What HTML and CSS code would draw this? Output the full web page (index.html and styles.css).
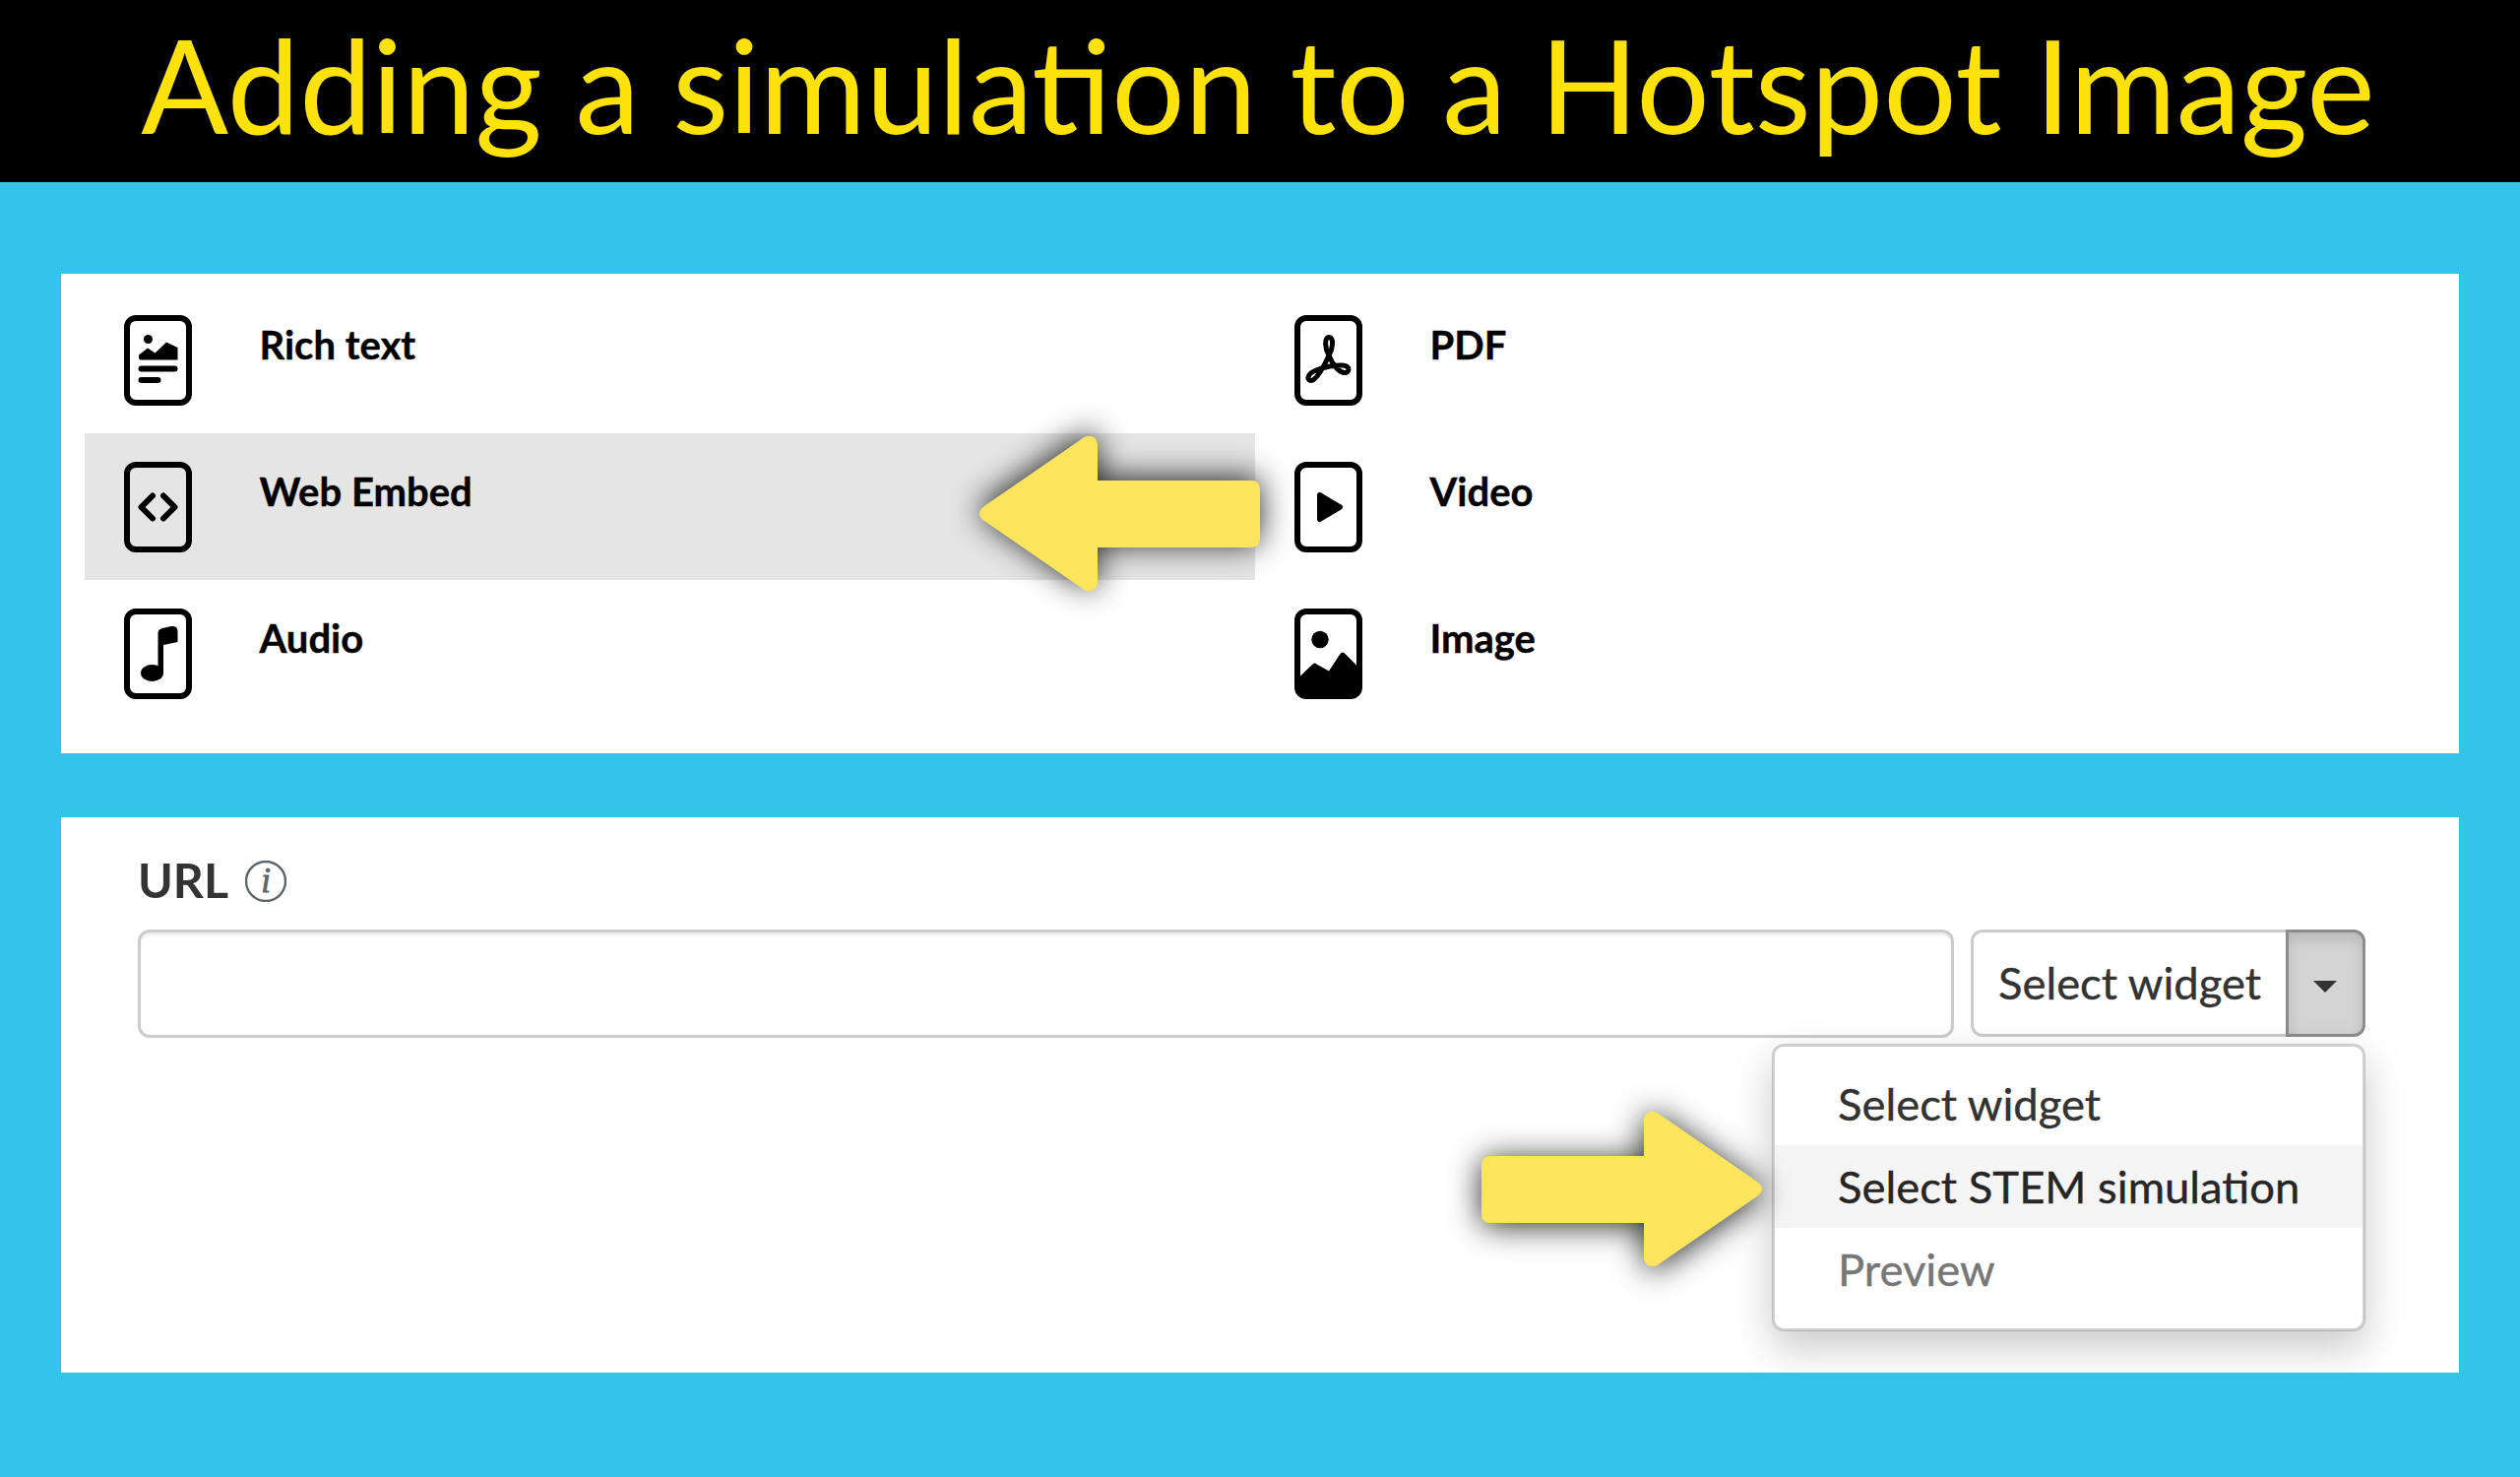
FILE: index.html
```html
<!DOCTYPE html>
<html lang="en">
<head>
    <meta charset="UTF-8">
    <meta name="viewport" content="width=device-width, initial-scale=1.0">
    <title>Adding a simulation to a Hotspot Image</title>
    <link rel="stylesheet" href="styles.css">
</head>
<body>
    <header>
        <h1>Adding a simulation to a Hotspot Image</h1>
    </header>

    <main>
        <section class="panel types">
            <div class="type">
                <svg class="type-icon" viewBox="0 0 69 92">
                    <rect class="frame" x="3" y="3" width="63" height="86" rx="9"/>
                    <circle cx="24.5" cy="24.5" r="4.5"/>
                    <path d="M15 43.5v-3l9-7 7.500 5L43 27.500 54.500 33v12.500H17q-2 0-2-2z"/>
                    <path class="line" d="M17.500 54.500h34M17.500 66h17"/>
                </svg>
                <span class="type-name">Rich text</span>
            </div>
            <div class="type">
                <svg class="type-icon" viewBox="0 0 69 92">
                    <rect class="frame" x="3" y="3" width="63" height="86" rx="9"/>
                    <path class="knot" d="M35 41C31 34 30 23 35 22.500C40.500 23 39 34 35 41C31 50 22 67 16.500 66.500C11.500 65.500 14 59 22 56C30 52.500 42 50.500 49 51C57.500 52 56 59.500 50 58.500C43 57 38 48 35 41z"/>
                </svg>
                <span class="type-name">PDF</span>
            </div>
            <div class="type active">
                <svg class="type-icon" viewBox="0 0 69 92">
                    <rect class="frame" x="3" y="3" width="63" height="86" rx="9"/>
                    <path class="line" d="M29 34.500L17.500 46 29 57.500M40 34.500L51.500 46 40 57.500"/>
                </svg>
                <span class="type-name">Web Embed</span>
            </div>
            <div class="type">
                <svg class="type-icon" viewBox="0 0 69 92">
                    <rect class="frame" x="3" y="3" width="63" height="86" rx="9"/>
                    <path class="play" d="M25.500 33.500L46.500 46 25.500 58.500z"/>
                </svg>
                <span class="type-name">Video</span>
            </div>
            <div class="type">
                <svg class="type-icon" viewBox="0 0 69 92">
                    <rect class="frame" x="3" y="3" width="63" height="86" rx="9"/>
                    <ellipse cx="28.500" cy="65.500" rx="11.500" ry="8.500"/>
                    <path d="M34.500 66V25q0-4 4.500-5l9-2q6.500-.5 6.500 5v11l-14.500 3v29z"/>
                </svg>
                <span class="type-name">Audio</span>
            </div>
            <div class="type">
                <svg class="type-icon" viewBox="0 0 69 92">
                    <rect class="frame" x="3" y="3" width="63" height="86" rx="9"/>
                    <circle cx="26" cy="31.500" r="8.700"/>
                    <path d="M4 70.500L18.500 56.500q2-2 4 0L35 63.500 46.500 46q2.500-3 5 0L65 59.500V80q0 9-9 9H13q-9 0-9-9z"/>
                </svg>
                <span class="type-name">Image</span>
            </div>
            <svg class="arrow arrow-left" viewBox="0 0 285 157">
                <path d="M276 45Q285 45 285 54V104Q285 113 276 113H120V148C120 156 112 160 105 155L5 86Q-5 78.500 5 71L105 2C112 -3 120 1 120 9V45Z"/>
            </svg>
        </section>

        <section class="panel embed">
            <label class="url-label" for="url">
                URL
                <svg class="info" viewBox="0 0 42 42">
                    <circle cx="21" cy="21" r="20"/>
                    <text x="21" y="32">i</text>
                </svg>
            </label>
            <div class="url-row">
                <input type="text" id="url" name="url">
                <div class="dropdown">
                    <button class="select" type="button">Select widget</button>
                    <button class="toggle" type="button" aria-label="Toggle menu"><span class="caret"></span></button>
                    <ul class="menu">
                        <li>Select widget</li>
                        <li class="hover">Select STEM simulation</li>
                        <li class="disabled">Preview</li>
                    </ul>
                </div>
            </div>
            <svg class="arrow arrow-right" viewBox="0 0 285 157">
                <path d="M9 45Q0 45 0 54V104Q0 113 9 113H165V148C165 156 173 160 180 155L280 86Q290 78.500 280 71L180 2C173 -3 165 1 165 9V45Z"/>
            </svg>
        </section>
    </main>
</body>
</html>
```
FILE: styles.css
```css
/* General Styles */
* {
    box-sizing: border-box;
}

body {
    font-family: 'Lato', sans-serif;
    margin: 0;
    padding: 0;
    background-color: #32c5e8;
    color: #333;
    overflow: hidden;
}

header {
    background-color: #000;
    height: 185px;
    text-align: center;
}

header h1 {
    margin: 0;
    padding: 6px 4px 0 0;
    font-size: 131.3px;
    font-weight: 400;
    line-height: 158px;
    color: #ffe20a;
    white-space: nowrap;
}

main {
    display: flex;
    flex-direction: column;
    gap: 64.5px;
    padding: 92.5px 62.5px 0 62px;
}

.panel {
    position: relative;
    background-color: #fff;
}

/* Content types */
.types {
    display: grid;
    grid-template-columns: 1189px 1189px;
    grid-auto-rows: 149px;
    height: 487.5px;
    padding: 13.5px 0 0 24px;
}

.type {
    display: flex;
    align-items: flex-start;
    gap: 69px;
    padding: 28.5px 0 0 39.5px;
}

.type.active {
    background-color: #e5e5e5;
}

.type-icon {
    width: 69px;
    height: 92px;
}

.type-icon .frame {
    fill: none;
    stroke: #000;
    stroke-width: 6;
}

.type-icon .line {
    fill: none;
    stroke: #000;
    stroke-width: 6;
    stroke-linecap: round;
    stroke-linejoin: round;
}

.type-icon .knot {
    fill: none;
    stroke: #000;
    stroke-width: 5;
    stroke-linejoin: round;
}

.type-icon .play {
    stroke: #000;
    stroke-width: 5;
    stroke-linejoin: round;
}

.type-name {
    margin-top: 6px;
    font-size: 40px;
    font-weight: 700;
    line-height: 49px;
    color: #000;
    -webkit-text-stroke: 0.4px #000;
}

/* Web embed form */
.embed {
    height: 564.5px;
    padding: 35px 94.5px 0 78px;
    overflow: hidden;
}

.url-label {
    display: flex;
    align-items: center;
    gap: 17px;
    height: 56px;
    font-size: 48.3px;
    font-weight: 700;
}

.info {
    width: 42px;
    height: 42px;
    margin-top: 5px;
}

.info circle {
    fill: none;
    stroke: #5f6468;
    stroke-width: 2.4;
}

.info text {
    fill: #5f6468;
    stroke: #5f6468;
    stroke-width: 0.8;
    font-family: 'Liberation Serif', serif;
    font-size: 35px;
    font-style: italic;
    font-weight: 400;
    text-anchor: middle;
}

.url-row {
    display: flex;
    align-items: flex-start;
    gap: 17px;
    margin-top: 23.5px;
}

.url-row input {
    width: 1845px;
    height: 110px;
    border: 3px solid #ccc;
    border-radius: 12px;
    box-shadow: inset 0 3px 3px rgba(0, 0, 0, 0.075);
    background-color: #fff;
}

.dropdown {
    position: relative;
    display: flex;
    width: 401px;
}

.select,
.toggle {
    height: 109px;
    margin: 0;
    padding: 0;
    font-family: inherit;
    color: #333;
}

.select {
    width: 320px;
    border: 3px solid #ccc;
    border-right: none;
    border-radius: 12px 0 0 12px;
    background-color: #fff;
    padding: 0 0 3px 0;
    font-size: 45.4px;
    -webkit-text-stroke: 0.4px #333;
}

.toggle {
    display: flex;
    align-items: center;
    justify-content: center;
    width: 81px;
    border: 3px solid #8c8c8c;
    border-radius: 0 12px 12px 0;
    background-color: #d4d4d4;
    box-shadow: inset 0 8px 14px rgba(0, 0, 0, 0.125);
}

.caret {
    margin: 7px 1px 0 0;
    border-top: 12px solid #333;
    border-left: 12px solid transparent;
    border-right: 12px solid transparent;
}

.menu {
    position: absolute;
    top: 116px;
    right: 0;
    width: 603px;
    margin: 0;
    padding: 16px 0 18px;
    list-style: none;
    border: 3px solid rgba(0, 0, 0, 0.18);
    border-radius: 12px;
    background-color: #fff;
    background-clip: padding-box;
    box-shadow: 0 17px 42px rgba(0, 0, 0, 0.21);
}

.menu li {
    height: 84px;
    padding-left: 64px;
    font-size: 45.4px;
    line-height: 83px;
    -webkit-text-stroke: 0.4px currentColor;
}

.menu li.hover {
    background-color: #f5f5f5;
    color: #262626;
}

.menu li.disabled {
    color: #777;
}

/* Arrows */
.arrow {
    position: absolute;
    width: 285px;
    height: 157px;
    overflow: visible;
    fill: #fbe45e;
}

.arrow-left {
    top: 165.5px;
    left: 933px;
    filter: drop-shadow(0 -3px 16px rgba(0, 0, 0, 0.85));
}

.arrow-right {
    top: 299.5px;
    left: 1443px;
    filter: drop-shadow(0 3px 16px rgba(0, 0, 0, 0.85));
}
```
